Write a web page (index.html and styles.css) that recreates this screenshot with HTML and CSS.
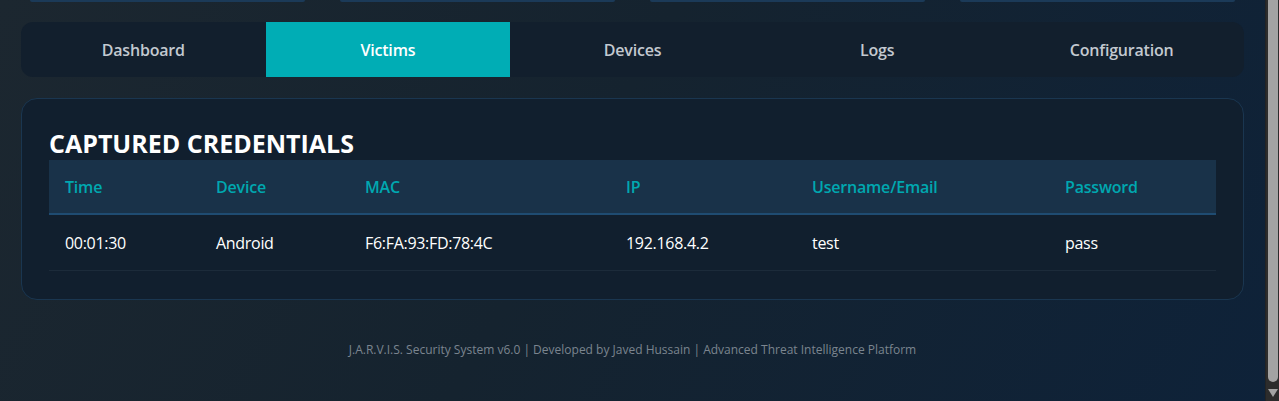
FILE: index.html
```html
<!DOCTYPE html>
<html lang="en">
<head>
<meta charset="utf-8">
<title>J.A.R.V.I.S. Security System</title>
<link rel="stylesheet" href="styles.css">
</head>
<body>
<div class="page">
  <div class="stats">
    <div class="stat"></div>
    <div class="stat"></div>
    <div class="stat"></div>
    <div class="stat"></div>
  </div>

  <nav class="tabs">
    <div class="tab">Dashboard</div>
    <div class="tab active">Victims</div>
    <div class="tab">Devices</div>
    <div class="tab">Logs</div>
    <div class="tab">Configuration</div>
  </nav>

  <section class="card">
    <h2 class="card-title">CAPTURED CREDENTIALS</h2>
    <table class="creds">
      <thead>
        <tr>
          <th class="c-time">Time</th>
          <th class="c-dev">Device</th>
          <th class="c-mac">MAC</th>
          <th class="c-ip">IP</th>
          <th class="c-user">Username/Email</th>
          <th class="c-pass">Password</th>
        </tr>
      </thead>
      <tbody>
        <tr>
          <td>00:01:30</td>
          <td>Android</td>
          <td>F6:FA:93:FD:78:4C</td>
          <td>192.168.4.2</td>
          <td>test</td>
          <td>pass</td>
        </tr>
      </tbody>
    </table>
  </section>

  <footer class="footer">J.A.R.V.I.S. Security System v6.0 | Developed by Javed Hussain | Advanced Threat Intelligence Platform</footer>
</div>
<div class="scrollbar"><div class="thumb"></div><div class="arrow"></div></div>
</body>
</html>
```

FILE: styles.css
```css
html, body {
  margin: 0;
  padding: 0;
  height: 100%;
  overflow: hidden;
}

body {
  font-family: "Open Sans", "Noto Sans", sans-serif;
  background: linear-gradient(120deg, #1c2730 0%, #15232f 45%, #0e2239 100%);
  color: #ffffff;
}

.page {
  width: 1265px;
  box-sizing: border-box;
  padding: 0 21px;
  display: flex;
  flex-direction: column;
}

.stats {
  display: grid;
  grid-template-columns: repeat(4, 1fr);
  gap: 35px;
  padding: 0 9px;
  height: 2px;
  margin-bottom: 20px;
}

.stat {
  border-bottom: 2px solid #1b3a58;
  border-radius: 0 0 6px 6px;
}

.tabs {
  display: grid;
  grid-template-columns: repeat(5, 1fr);
  height: 55px;
  background: #121f2d;
  border-radius: 12px;
  overflow: hidden;
}

.tab {
  display: flex;
  align-items: center;
  justify-content: center;
  font-size: 16px;
  font-weight: 600;
  color: #c3c9d0;
  letter-spacing: -0.2px;
}

.tab.active {
  background: #00adb5;
  color: #ffffff;
}

.card {
  margin-top: 21px;
  background: #111f2e;
  border: 1px solid #1a3650;
  border-radius: 16px;
  padding: 27px 27px 28px;
}

.card-title {
  margin: 0;
  font-size: 25px;
  line-height: 34px;
  font-weight: 700;
  color: #ffffff;
  letter-spacing: 0;
}

.creds {
  width: 100%;
  border-collapse: collapse;
  font-size: 16px;
}

.creds th {
  box-sizing: border-box;
  background: #193249;
  color: #00a8b0;
  font-weight: 600;
  text-align: left;
  height: 54px;
  padding: 0 16px;
  border-bottom: 2px solid #1f4c72;
  letter-spacing: -0.2px;
}

.creds td {
  height: 55px;
  padding: 0 16px;
  text-align: left;
  color: #ffffff;
  border-bottom: 1px solid #1c2b3a;
  letter-spacing: -0.3px;
}

.c-time { width: 151px; }
.c-dev { width: 149px; }
.c-mac { width: 261px; }
.c-ip { width: 186px; }
.c-user { width: 253px; }

.footer {
  text-align: center;
  font-size: 12px;
  color: #7b858f;
  padding-top: 41px;
  letter-spacing: 0;
}

.scrollbar {
  position: fixed;
  top: 0;
  right: 0;
  width: 14px;
  height: 100%;
  background: #2c2c2c;
  border-left: 1px solid #232323;
  box-sizing: border-box;
}

.thumb {
  position: absolute;
  left: 2px;
  right: 1px;
  top: 0;
  height: 382px;
  background: #a3a3a3;
  border-radius: 0 0 5px 5px;
}

.arrow {
  position: absolute;
  left: 2px;
  bottom: 4px;
  width: 0;
  height: 0;
  border-left: 5px solid transparent;
  border-right: 5px solid transparent;
  border-top: 8px solid #a3a3a3;
}
```
